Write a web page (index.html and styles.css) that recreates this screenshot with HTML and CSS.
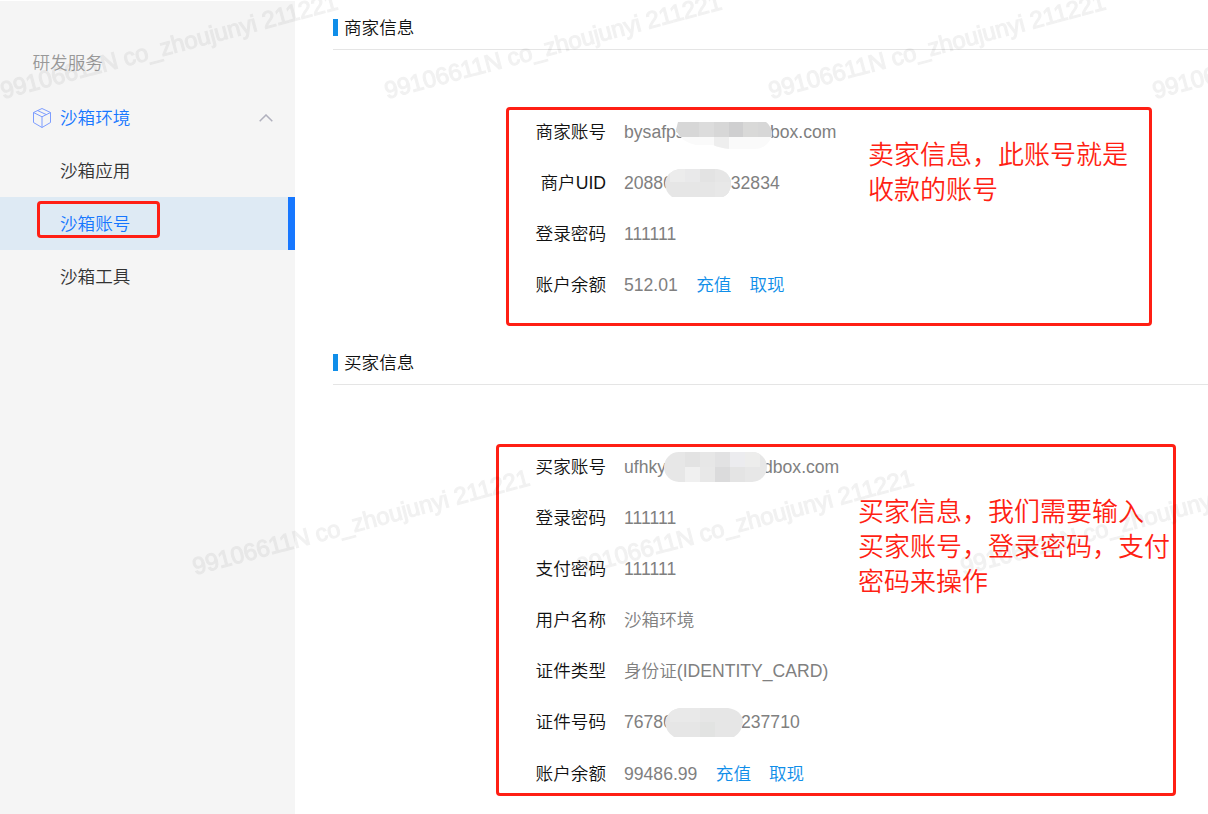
FILE: index.html
```html
<!DOCTYPE html>
<html lang="zh-CN">
<head>
  <meta charset="utf-8">
  <title>沙箱账号</title>
  <link rel="stylesheet" href="styles.css">
</head>
<body>
  <div class="page">
    <aside class="sidebar">
      <h2 class="group">研发服务</h2>
      <div class="menu-title">
        <svg class="cube" viewBox="0 0 20 22">
          <path d="M10 1.500 L18.500 5.500 V15.500 L10 20.500 L1.500 15.500 V5.500 Z M1.500 5.500 L10 9.800 L18.500 5.500 M10 9.800 V20.500 M5.700 3.600 L14.300 7.600"/>
        </svg>
        <span>沙箱环境</span>
        <svg class="arrow" viewBox="0 0 14 8">
          <path d="M0.700 7.300 L7 1 L13.300 7.300"/>
        </svg>
      </div>
      <nav class="menu">
        <a>沙箱应用</a>
        <a class="active">沙箱账号</a>
        <a>沙箱工具</a>
      </nav>
      <div class="frame frame-menu"></div>
    </aside>

    <main class="content">
      <section class="seller">
        <h3>商家信息</h3>
        <dl>
          <dt>商家账号</dt>
          <dd>
            <span class="head head-seller">bysafps</span><span>box.com</span>
            <svg class="mask mask-seller" viewBox="0 0 96 27">
              <clipPath id="m1"><path d="M2 0 H90 Q96 4 96 14 Q91 27 78 27 H54 Q44 26 37 23 H20 Q5 20 0 8 Z"/></clipPath>
              <g clip-path="url(#m1)">
                <rect width="96" height="27" fill="#fafafa"/>
                <rect width="96" height="15" fill="#d7d7d7"/>
                <rect x="23" width="15" height="15" fill="#dcdcdc"/>
                <rect x="53" width="14" height="15" fill="#cfcfd0"/>
                <rect x="67" width="15" height="15" fill="#d9d9d8"/>
                <rect x="38" y="15" width="15" height="12" fill="#eeeeee"/>
              </g>
            </svg>
          </dd>
          <dt>商户UID</dt>
          <dd>
            <span class="head head-uid">20880</span><span>032834</span>
            <svg class="mask mask-uid" viewBox="0 0 66 28">
              <clipPath id="m2"><path d="M14 0 H52 Q66 2 66 16 Q65 25 58 28 H7 Q0 23 0 14 Q2 2 14 0 Z"/></clipPath>
              <g clip-path="url(#m2)">
                <rect width="66" height="28" fill="#e6e6e6"/>
                <rect x="5" width="15" height="13" fill="#ececec"/>
                <rect x="20" width="15" height="13" fill="#e9e9ea"/>
                <rect x="35" width="15" height="13" fill="#e3e3e3"/>
                <rect x="50" y="13" width="16" height="15" fill="#e8e8e8"/>
              </g>
            </svg>
          </dd>
          <dt>登录密码</dt>
          <dd>111111</dd>
          <dt>账户余额</dt>
          <dd>512.01 <a>充值</a><a>取现</a></dd>
        </dl>
        <div class="frame frame-seller"></div>
        <p class="note note-seller">卖家信息，此账号就是<br>收款的账号</p>
      </section>

      <section class="buyer">
        <h3>买家信息</h3>
        <dl>
          <dt>买家账号</dt>
          <dd>
            <span class="head head-buyer">ufhky</span><span>dbox.com</span>
            <svg class="mask mask-buyer" viewBox="0 0 103 30">
              <clipPath id="m3"><rect width="103" height="30" rx="15"/></clipPath>
              <g clip-path="url(#m3)">
                <rect width="103" height="30" fill="#e7e7e7"/>
                <rect x="21" width="15" height="15" fill="#e3e3e3"/>
                <rect x="51" width="15" height="15" fill="#e2e2e3"/>
                <rect x="66" width="15" height="15" fill="#ececef"/>
                <rect x="81" width="15" height="15" fill="#ededec"/>
                <rect x="21" y="15" width="15" height="15" fill="#f0f0f0"/>
                <rect x="36" y="15" width="15" height="15" fill="#e8e8e8"/>
                <rect x="51" y="15" width="15" height="15" fill="#dbdbdc"/>
                <rect x="66" y="15" width="15" height="15" fill="#e4e4e4"/>
              </g>
            </svg>
          </dd>
          <dt>登录密码</dt>
          <dd>111111</dd>
          <dt>支付密码</dt>
          <dd>111111</dd>
          <dt>用户名称</dt>
          <dd>沙箱环境</dd>
          <dt>证件类型</dt>
          <dd>身份证(IDENTITY_CARD)</dd>
          <dt>证件号码</dt>
          <dd>
            <span class="head head-card">76780</span><span>237710</span>
            <svg class="mask mask-card" viewBox="0 0 78 29">
              <clipPath id="m4"><path d="M15 0 H63 Q77 2 78 14 Q77 24 69 29 H9 Q1 24 0 15 Q2 2 15 0 Z"/></clipPath>
              <g clip-path="url(#m4)">
                <rect width="78" height="29" fill="#e6e6e6"/>
                <rect x="5" width="30" height="14" fill="#e9e9e9"/>
                <rect x="35" y="14" width="15" height="15" fill="#e2e3e2"/>
              </g>
            </svg>
          </dd>
          <dt>账户余额</dt>
          <dd>99486.99 <a>充值</a><a>取现</a></dd>
        </dl>
        <div class="frame frame-buyer"></div>
        <p class="note note-buyer">买家信息，我们需要输入<br>买家账号，登录密码，支付<br>密码来操作</p>
      </section>
    </main>

    <!-- repeated user watermark -->
    <svg class="watermark" viewBox="0 0 1208 814">
      <text transform="translate(3 99) rotate(-15)" textLength="348">99106611N co_zhoujunyi 211221</text>
      <text transform="translate(387 99) rotate(-15)" textLength="348">99106611N co_zhoujunyi 211221</text>
      <text transform="translate(771 99) rotate(-15)" textLength="348">99106611N co_zhoujunyi 211221</text>
      <text transform="translate(1155 99) rotate(-15)" textLength="348">99106611N co_zhoujunyi 211221</text>
      <text transform="translate(195 575) rotate(-15)" textLength="348">99106611N co_zhoujunyi 211221</text>
      <text transform="translate(579 575) rotate(-15)" textLength="348">99106611N co_zhoujunyi 211221</text>
      <text transform="translate(963 575) rotate(-15)" textLength="348">99106611N co_zhoujunyi 211221</text>
    </svg>
  </div>
</body>
</html>
```
FILE: styles.css
```css
* {
  box-sizing: border-box;
}
body {
  margin: 0;
  background-color: #fff;
  font-family: "Liberation Sans", "Noto Sans CJK SC", sans-serif;
  font-size: 17.6px;
  font-weight: 350;
  color: #111;
}
h2, h3, dl, dd, p {
  margin: 0;
  font-size: inherit;
  font-weight: inherit;
}
.page {
  position: relative;
  display: flex;
  height: 814px;
  overflow: hidden;
}

/* Sidebar */
.sidebar {
  position: relative;
  width: 295px;
  margin-top: 1px;
  background-color: #f5f5f5;
}
.group {
  padding: 36px 0 0 32.5px;
  line-height: 52px;
  color: #999;
}
.menu-title {
  display: flex;
  align-items: center;
  height: 52px;
  margin-top: 3px;
  padding: 0 22px 0 32px;
  line-height: 48px;
  color: #1677ff;
}
.menu-title span {
  padding-bottom: 1px;
}
.cube {
  width: 20px;
  height: 22px;
  margin-right: 8px;
  fill: none;
  stroke: #7d9dff;
  stroke-width: 1;
}
.arrow {
  width: 14px;
  height: 8px;
  margin-left: auto;
  fill: none;
  stroke: #b0b0bd;
  stroke-width: 1.5;
}
.menu a {
  display: block;
  height: 52.7px;
  padding-left: 60px;
  line-height: 54px;
  color: #333;
}
.menu .active {
  height: 53px;
  background-color: #deeaf4;
  border-right: 7px solid #1677ff;
  color: #1677ff;
}

/* Account details */
.content {
  flex: 1;
  padding-left: 38px;
}
section {
  position: relative;
}
.seller {
  height: 335px;
}
h3 {
  display: flex;
  align-items: center;
  height: 50px;
  padding-top: 4px;
  border-bottom: 1px solid #e5e5e5;
}
h3::before {
  content: "";
  width: 5px;
  height: 17px;
  margin-top: 2px;
  margin-right: 6px;
  background-color: #108ee9;
}
dl {
  display: grid;
  grid-template-columns: 273px 1fr;
  column-gap: 18px;
  grid-auto-rows: 51.1px;
  padding-top: 56px;
  line-height: 53px;
}
dt {
  text-align: right;
}
dd {
  position: relative;
  color: #808080;
  white-space: nowrap;
}
dd a {
  margin-left: 13.5px;
  color: #108ee9;
}
dd a + a {
  margin-left: 18px;
}
.head {
  display: inline-block;
}
.head-seller { width: 146px; }
.head-uid { width: 97px; }
.head-buyer { width: 139px; }
.head-card { width: 117px; }

/* Blurred-out parts of the account numbers */
.mask {
  position: absolute;
}
.mask-seller {
  left: 52px;
  top: 16px;
  width: 96px;
  height: 27px;
}
.mask-uid {
  left: 41px;
  top: 12px;
  width: 66px;
  height: 28px;
}
.mask-buyer {
  left: 40px;
  top: 11px;
  width: 103px;
  height: 30px;
}
.mask-card {
  left: 41px;
  top: 11.500px;
  width: 78px;
  height: 29px;
}

/* Red frames and notes */
.frame {
  position: absolute;
  border: 3px solid #ff1f14;
  border-radius: 4px;
}
.frame-menu {
  left: 37px;
  top: 200px;
  width: 123px;
  height: 37px;
}
.frame-seller {
  left: 173px;
  top: 107px;
  width: 646px;
  height: 219px;
}
.frame-buyer {
  left: 163px;
  top: 109px;
  width: 680px;
  height: 352px;
}
.note {
  position: absolute;
  font-size: 26px;
  line-height: 35px;
  color: #ff1f14;
  white-space: nowrap;
}
.note-seller {
  left: 535px;
  top: 138px;
}
.note-buyer {
  left: 525px;
  top: 160px;
}

.watermark {
  position: absolute;
  left: 0;
  top: 0;
  width: 1208px;
  height: 814px;
  pointer-events: none;
  font-size: 24px;
  fill: #000;
  stroke: #000;
  stroke-width: 1.2;
  opacity: 0.05;
  filter: blur(0.5px);
}
```
